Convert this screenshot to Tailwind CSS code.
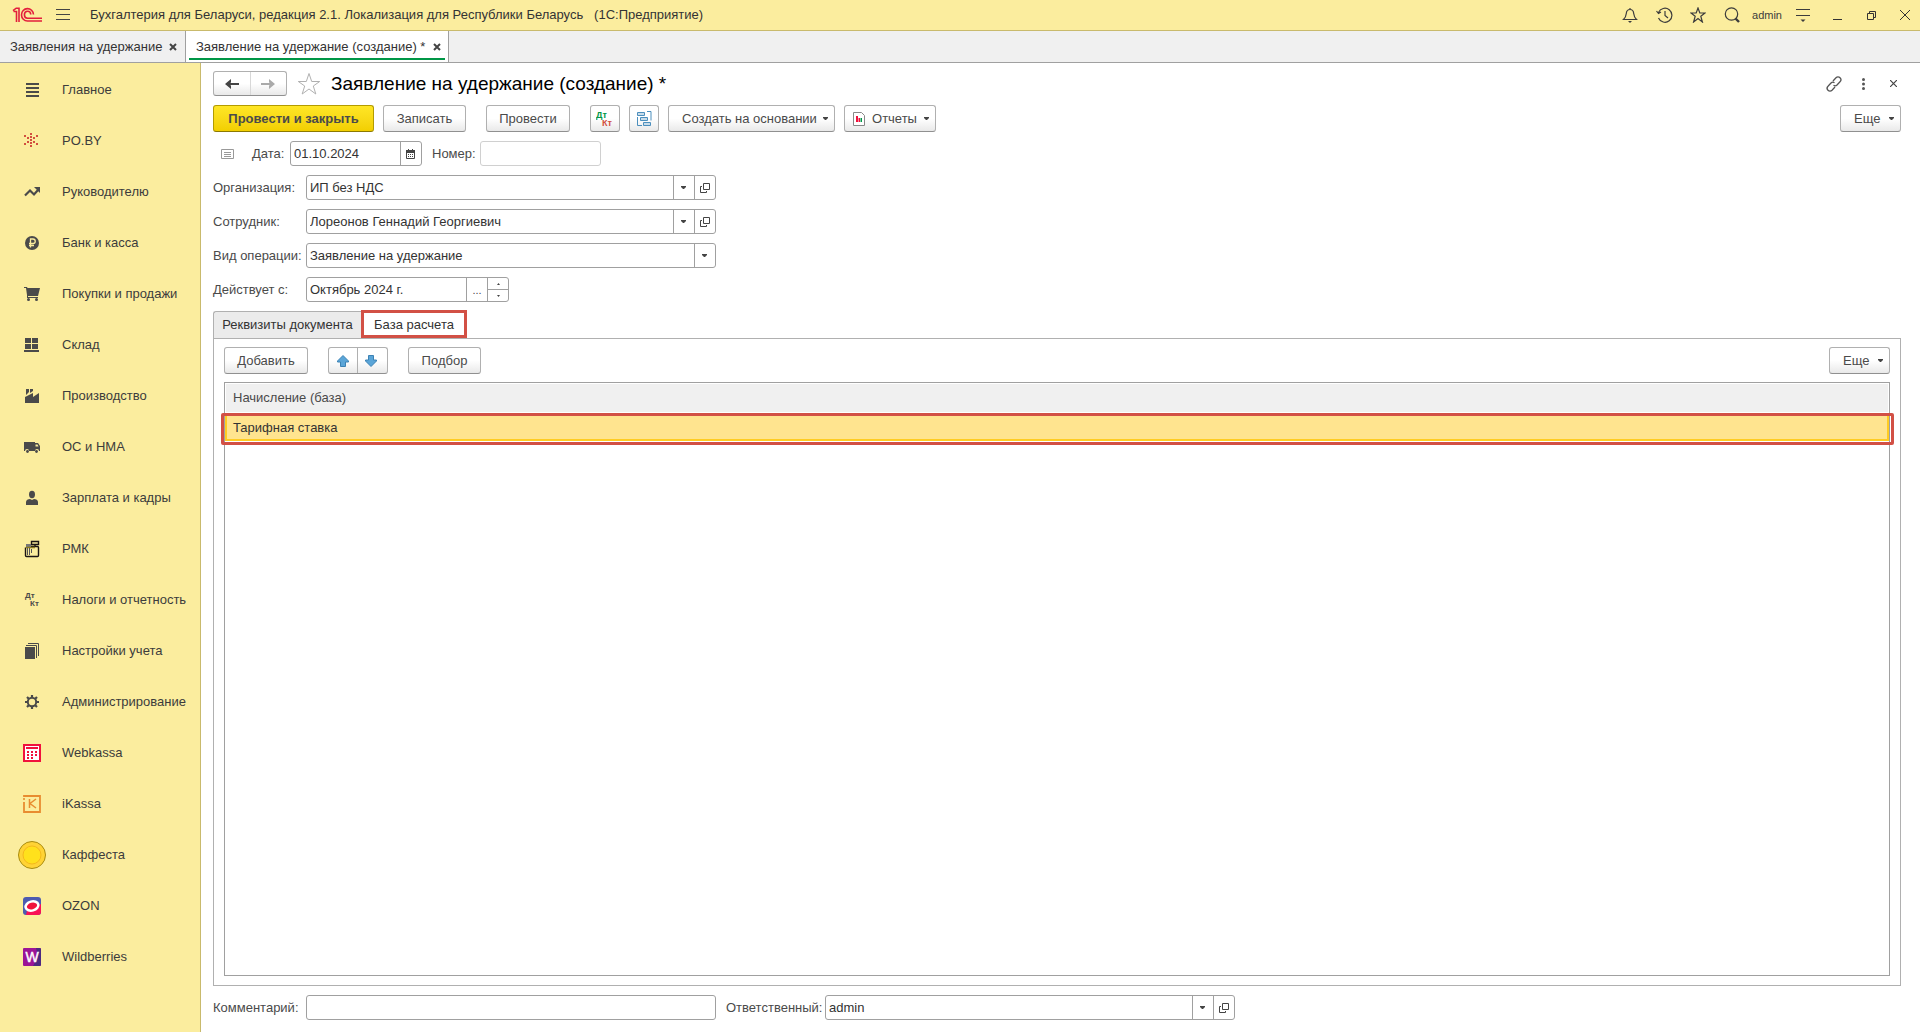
<!DOCTYPE html>
<html lang="ru">
<head>
<meta charset="utf-8">
<title>Заявление на удержание (создание)</title>
<script src="https://cdn.jsdelivr.net/npm/@tailwindcss/browser@4"></script>
</head>
<body class="flex min-h-screen flex-col bg-white font-['Liberation_Sans',Arial,sans-serif] text-[13px] leading-4 text-[#333]">
<svg class="hidden">
  <symbol id="caret" viewBox="0 0 5 3"><path d="M0 0h5v1L3 3H2L0 1z" fill="#444"/></symbol>
  <symbol id="open" viewBox="0 0 10 10"><path d="M3.500 .5h6v6h-6zM2 3.500H.5v6h6V8" fill="none" stroke="#444"/></symbol>
  <symbol id="cross" viewBox="0 0 8 8"><path d="M1 1l6 6M7 1L1 7" fill="none" stroke="#444" stroke-width="2"/></symbol>
</svg>

<header class="flex h-[31px] items-center border-b border-[#c9ba6c] bg-[#fbed9e] pr-[10px] pl-3">
  <svg class="h-4 w-[31px]" viewBox="0 0 31 16" fill="none" stroke="#e31e3c" stroke-width="1.600"><path d="M1 3.600L4.200 1.200H7V15M4.500 15V4.500H1.500M21.500 7.500A6 6.200 0 1 0 15.500 14H30M18.800 7.500A3.200 3.500 0 1 0 15.500 11.300H30"/></svg>
  <button class="ml-[13px]" aria-label="Меню"><svg class="h-3 w-[14px]" viewBox="0 0 14 12" fill="none" stroke="#444"><path d="M0 .5h14M0 5.500h14M0 10.500h14"/></svg></button>
  <span class="ml-5 whitespace-nowrap">Бухгалтерия для Беларуси, редакция 2.1. Локализация для Республики Беларусь &nbsp; (1С:Предприятие)</span>
  <div class="ml-auto flex items-center text-[#3c3c3c]">
    <button aria-label="Уведомления"><svg class="size-4" viewBox="0 0 16 16" fill="none" stroke="currentColor" stroke-width="1.200"><path d="M1.500 12.500h13c-2-2-2.500-3-2.800-6C11.500 3.500 10 2.500 8 2.500S4.500 3.500 4.300 6.500c-.3 3-.8 4-2.800 6zM8 2.500V1"/><path d="M6 14h4l-2 2z" fill="currentColor" stroke="none"/></svg></button>
    <button class="ml-[18px]" aria-label="История"><svg class="h-4 w-[17px]" viewBox="0 0 17 16" fill="none" stroke="currentColor" stroke-width="1.200"><path d="M2.500 5.500A7 7 0 1 1 2.500 11M9 4v4.500l3 2.500M.5 4l2 2.500L5 5"/></svg></button>
    <button class="ml-[17px]" aria-label="Избранное"><svg class="size-4" viewBox="0 0 16 16" fill="none" stroke="currentColor" stroke-width="1.200"><path d="M8 1l1.800 5h5.200l-4.200 3.200L12.400 15 8 11.500 3.600 15l1.600-5.800L1 6h5.200z"/></svg></button>
    <button class="ml-[18px]" aria-label="Поиск"><svg class="size-4" viewBox="0 0 16 16" fill="none" stroke="currentColor" stroke-width="1.200"><circle cx="7.500" cy="7" r="6.200"/><path d="M11.500 11.500l3.500 3.500" stroke-width="2.400"/></svg></button>
    <span class="ml-3 text-[11px]">admin</span>
    <button class="ml-[14px]" aria-label="Сервис"><svg class="h-[13px] w-[14px]" viewBox="0 0 14 13" fill="none" stroke="currentColor"><path d="M0 .5h14M0 6.500h14"/><path d="M4.500 10.500h5L7 13z" fill="currentColor" stroke="none"/></svg></button>
    <button class="ml-[23px]" aria-label="Свернуть"><svg class="h-[10px] w-[9px]" viewBox="0 0 9 10"><path d="M0 9.500h9" stroke="#333"/></svg></button>
    <button class="ml-[25px]" aria-label="Развернуть"><svg class="size-[9px]" viewBox="0 0 9 9" fill="none" stroke="#333"><path d="M.5 2.500h6v6h-6zM2.500 2V.5h6v6H7"/></svg></button>
    <button class="ml-6" aria-label="Закрыть программу"><svg class="size-[10px]" viewBox="0 0 10 10" fill="none" stroke="#333"><path d="M0 0l10 10M10 0L0 10"/></svg></button>
  </div>
</header>

<nav class="flex h-8 border-b border-[#a0a0a0] bg-[#f0f0f0]" aria-label="Открытые окна">
  <a href="#" class="flex w-[186px] items-center justify-between border-r border-[#a0a0a0] pr-2 pl-[10px] whitespace-nowrap">Заявления на удержание<svg class="size-2"><use href="#cross"/></svg></a>
  <a href="#" class="flex w-[263px] border-r border-[#a0a0a0] bg-white px-[3px]"><span class="mb-[2px] flex flex-1 items-center justify-between border-b-2 border-[#009646] pt-1 pr-1 pl-[7px] whitespace-nowrap">Заявление на удержание (создание) *<svg class="size-2"><use href="#cross"/></svg></span></a>
</nav>

<div class="flex flex-1">
  <aside class="w-[201px] shrink-0 border-r border-[#c9ba6c] bg-[#fbed9e] pt-px">
    <nav class="flex flex-col text-[#3c3c3c]" aria-label="Разделы">
      <a href="#" class="flex h-[51px] items-center gap-4 pl-[18px]"><svg class="size-7" viewBox="0 0 28 28"><path d="M8 7h13v2H8zM8 11h13v2H8zM8 15h13v2H8zM8 19h13v2H8z" fill="#4a4a4a"/></svg>Главное</a>
      <a href="#" class="flex h-[51px] items-center gap-4 pl-[18px]"><svg class="size-7" viewBox="0 0 28 28"><path d="M12 6h2v2h-2zM12 9h2v2h-2zM12 12h2v2h-2zM12 15h2v2h-2zM12 18h2v2h-2zM6 8h2v2H6zM18 8h2v2h-2zM9 10h2v2H9zM15 10h2v2h-2zM9 14h2v2H9zM15 14h2v2h-2zM6 16h2v2H6zM18 16h2v2h-2z" fill="#d2503f"/></svg>PO.BY</a>
      <a href="#" class="flex h-[51px] items-center gap-4 pl-[18px]"><svg class="size-7" viewBox="0 0 28 28"><path d="M7 17.500l5-5 4 4 4-4.500" fill="none" stroke="#4a4a4a" stroke-width="2.200"/><path d="M16 9h6v6z" fill="#4a4a4a"/></svg>Руководителю</a>
      <a href="#" class="flex h-[51px] items-center gap-4 pl-[18px]"><svg class="size-7" viewBox="0 0 28 28"><circle cx="14" cy="14" r="7" fill="#4a4a4a"/><path d="M12.500 18.500V10h2.500a2.200 2.200 0 0 1 0 4.500h-4M11 16.500h5" fill="none" stroke="#fbed9e" stroke-width="1.300"/></svg>Банк и касса</a>
      <a href="#" class="flex h-[51px] items-center gap-4 pl-[18px]"><svg class="size-7" viewBox="0 0 28 28" fill="#4a4a4a"><path d="M6 7h3l.5 1H22l-2 8H10v1h10v1H9v-3L8 8H6z"/><circle cx="10.500" cy="19.500" r="1.500"/><circle cx="18.500" cy="19.500" r="1.500"/></svg>Покупки и продажи</a>
      <a href="#" class="flex h-[51px] items-center gap-4 pl-[18px]"><svg class="size-7" viewBox="0 0 28 28"><path d="M7 7h6v5H7zM14 7h6v5h-6zM7 13h6v5H7zM14 13h6v5h-6zM6 19h15v2H6z" fill="#4a4a4a"/></svg>Склад</a>
      <a href="#" class="flex h-[51px] items-center gap-4 pl-[18px]"><svg class="size-7" viewBox="0 0 28 28"><path d="M7 21v-6l8-4v4l6-4v10zM8 7h3v3l-3 3zM12 7h3v2l-3 2z" fill="#4a4a4a"/></svg>Производство</a>
      <a href="#" class="flex h-[51px] items-center gap-4 pl-[18px]"><svg class="size-7" viewBox="0 0 28 28"><path d="M6 9h11v1h3l2 3v5h-1a2 2 0 0 0-4 0h-6a2 2 0 0 0-4 0H6z" fill="#4a4a4a"/><circle cx="9.500" cy="18.500" r="1.400" fill="#4a4a4a"/><circle cx="18.500" cy="18.500" r="1.400" fill="#4a4a4a"/><path d="M17.500 11.500h2l1 2h-3z" fill="#fbed9e"/></svg>ОС и НМА</a>
      <a href="#" class="flex h-[51px] items-center gap-4 pl-[18px]"><svg class="size-7" viewBox="0 0 28 28" fill="#4a4a4a"><ellipse cx="14" cy="10.500" rx="3" ry="3.700"/><path d="M8 21v-3c0-2 2-3 4-3l2 1 2-1c2 0 4 1 4 3v3z"/></svg>Зарплата и кадры</a>
      <a href="#" class="flex h-[51px] items-center gap-4 pl-[18px]"><svg class="size-7" viewBox="0 0 28 28" fill="none"><path d="M13 11.500h6.500a1 1 0 0 1 1 1v8a1 1 0 0 1-1 1h-11a1 1 0 0 1-1-1v-8" stroke="#1a1414" stroke-width="1.400"/><path d="M13.500 6.500h7v3h-7zM17 9.500v2" stroke="#1a1414" stroke-width="1.400"/><path d="M8 9h5v4H8z" fill="#777"/><path d="M8 12.500h9" stroke="#8a7a20" stroke-width="1.500"/><path d="M9.500 13v7M11.500 13v7M13.500 14v4" stroke="#555"/></svg>РМК</a>
      <a href="#" class="flex h-[51px] items-center gap-4 pl-[18px]"><svg class="size-7" viewBox="0 0 28 28" fill="#4a4a4a" font-size="8" font-weight="700"><text x="7" y="12">Дт</text><text x="12" y="20">Кт</text></svg>Налоги и отчетность</a>
      <a href="#" class="flex h-[51px] items-center gap-4 pl-[18px]"><svg class="size-7" viewBox="0 0 28 28"><path d="M7 10h10v12H7z" fill="#4a4a4a"/><path d="M8 8.500h10.500V21M10 6.500h10.500V19" fill="none" stroke="#4a4a4a"/></svg>Настройки учета</a>
      <a href="#" class="flex h-[51px] items-center gap-4 pl-[18px]"><svg class="size-7" viewBox="0 0 28 28" fill="none" stroke="#4a4a4a"><circle cx="14" cy="14" r="4.200" stroke-width="2"/><path d="M14 7v2.500M14 18.500V21M7 14h2.500M18.500 14H21M9 9l2 2M17 17l2 2M19 9l-2 2M11 17l-2 2" stroke-width="2.200"/></svg>Администрирование</a>
      <a href="#" class="flex h-[51px] items-center gap-4 pl-[18px]"><svg class="size-7" viewBox="0 0 28 28"><path d="M6 6h16v16H6z" fill="#fff" stroke="#f0123c" stroke-width="2"/><path d="M8 8h12v2H8zM9 12h2v2H9zM13 12h2v2h-2zM17 12h2v2h-2zM9 15h2v2H9zM13 15h2v2h-2zM17 15h2v2h-2zM9 18h2v2H9zM13 18h2v2h-2z" fill="#f0123c"/></svg>Webkassa</a>
      <a href="#" class="flex h-[51px] items-center gap-4 pl-[18px]"><svg class="size-7" viewBox="0 0 28 28" fill="none" stroke="#e88c30"><path d="M6 7V6h16v16H6V12" stroke-width="1.800"/><path d="M6 8v2" stroke-width="1.600"/><path d="M11.500 9v9M18 9l-6 4.500 6 4.500" stroke-width="1.500"/></svg>iKassa</a>
      <a href="#" class="flex h-[51px] items-center gap-4 pl-[18px]"><svg class="size-7" viewBox="0 0 28 28"><circle cx="14" cy="14" r="13.500" fill="#ffd335" stroke="#a88c10"/><circle cx="14" cy="14" r="9" fill="#ffe11c" stroke="#f5b81c"/></svg>Каффеста</a>
      <a href="#" class="flex h-[51px] items-center gap-4 pl-[18px]"><svg class="size-7" viewBox="0 0 28 28"><rect x="5" y="5" width="18" height="18" rx="3" fill="#4d5bb0"/><path d="M8 23h12a3 3 0 0 0 3-3v-8L9 19z" fill="#f91155"/><ellipse cx="14" cy="14" rx="6.500" ry="4.500" transform="rotate(-15 14 14)" fill="#f0123c" stroke="#fff" stroke-width="2.500"/></svg>OZON</a>
      <a href="#" class="flex h-[51px] items-center gap-4 pl-[18px]"><svg class="size-7" viewBox="0 0 28 28"><rect x="5" y="5" width="18" height="18" rx="1" fill="#9b1596"/><path d="M18 5h4l1 1v16l-1 1h-7l5-9z" fill="#4b2a80"/><text x="14" y="19" text-anchor="middle" font-size="14" fill="#fff" stroke="#fff" stroke-width=".4">W</text></svg>Wildberries</a>
    </nav>
  </aside>

  <main class="flex min-w-0 flex-1 flex-col pt-2 pr-[19px] pb-3 pl-3 text-[#4a4a4a]">
    <div class="flex h-[25px] items-center">
      <div class="flex h-[25px] w-[74px] rounded-[3px] border border-[#b0b0b0] border-b-[#909090] bg-linear-to-b from-white from-50% to-[#e9e9e9]">
        <button class="grid flex-1 place-items-center" aria-label="Назад"><svg class="h-[10px] w-[14px]" viewBox="0 0 14 10"><path d="M0 5l6-5v3.500L5 4h9v2H5l1 .5V10z" fill="#444"/></svg></button>
        <button class="grid flex-1 place-items-center border-l border-[#d8d8d8]" aria-label="Вперед"><svg class="h-[10px] w-[14px]" viewBox="0 0 14 10"><path d="M14 5L8 0v3.500L9 4H0v2h9l-1 .5V10z" fill="#aaa"/></svg></button>
      </div>
      <button class="ml-[10px]" aria-label="Добавить в избранное"><svg class="size-6" viewBox="0 0 24 24" fill="none" stroke="#b0b0b0"><path d="M12 1.500l2.700 8h8L16.300 14l2.500 8L12 17l-6.800 5 2.500-8L1.300 9.500h8z"/></svg></button>
      <h1 class="ml-[10px] text-[19px] leading-6 text-black">Заявление на удержание (создание) *</h1>
      <div class="ml-auto flex items-center pr-1">
        <button aria-label="Ссылка"><svg class="size-4" viewBox="0 0 16 16" fill="none" stroke="#555" stroke-width="1.300"><path d="M7 5l3-3.200a2.700 2.700 0 0 1 4 4L11 9c-1 1-2.500 1-3.500.3M9 11l-3 3.200a2.700 2.700 0 0 1-4-4L5 7c1-1 2.500-1 3.500-.3"/></svg></button>
        <button class="ml-5" aria-label="Еще действия"><svg class="h-3 w-[3px]" viewBox="0 0 3 12" fill="#555"><circle cx="1.500" cy="1.500" r="1.500"/><circle cx="1.500" cy="6" r="1.500"/><circle cx="1.500" cy="10.500" r="1.500"/></svg></button>
        <button class="ml-[25px]" aria-label="Закрыть"><svg class="size-[7px]" viewBox="0 0 7 7" fill="none" stroke="#444" stroke-width="1.200"><path d="M0 0l7 7M7 0L0 7"/></svg></button>
      </div>
    </div>

    <div class="mt-[9px] flex">
      <button class="h-[27px] w-[161px] rounded-[3px] border border-[#b39b00] border-b-[#8c7900] bg-linear-to-b from-[#ffe625] to-[#f2cf00] font-bold whitespace-nowrap">Провести и закрыть</button>
      <button class="ml-[9px] h-[27px] w-[83px] rounded-[3px] border border-[#b0b0b0] border-b-[#909090] bg-linear-to-b from-white from-50% to-[#e9e9e9]">Записать</button>
      <button class="ml-5 h-[27px] w-[84px] rounded-[3px] border border-[#b0b0b0] border-b-[#909090] bg-linear-to-b from-white from-50% to-[#e9e9e9]">Провести</button>
      <button class="ml-5 grid h-[27px] w-[30px] place-items-center rounded-[3px] border border-[#b0b0b0] border-b-[#909090] bg-linear-to-b from-white from-50% to-[#e9e9e9]" aria-label="Проводки"><svg class="h-4 w-[18px]" viewBox="0 0 18 16" font-size="9" font-weight="700"><text x="0" y="7" fill="#009646">Дт</text><text x="6" y="15" fill="#d2503f">Кт</text></svg></button>
      <button class="ml-[9px] grid h-[27px] w-[30px] place-items-center rounded-[3px] border border-[#b0b0b0] border-b-[#909090] bg-linear-to-b from-white from-50% to-[#e9e9e9]" aria-label="Структура подчиненности"><svg class="h-[15px] w-[15px]" viewBox="0 0 15 15" fill="#c8dcea" stroke="#4c8fbd"><path d="M.5 1.500h7v3h-7zM3.500 6.500h7v3h-7zM6.500 11.500h7v3h-7z"/><path d="M10 .5h4v9M.5 6v8.500H5" fill="none"/></svg></button>
      <button class="ml-[9px] flex h-[27px] w-[167px] items-center justify-between rounded-[3px] border border-[#b0b0b0] border-b-[#909090] bg-linear-to-b from-white from-50% to-[#e9e9e9] pr-[6px] pl-[13px] whitespace-nowrap">Создать на основании<svg class="h-[3px] w-[5px]"><use href="#caret"/></svg></button>
      <button class="ml-[9px] flex h-[27px] w-[92px] items-center justify-between rounded-[3px] border border-[#b0b0b0] border-b-[#909090] bg-linear-to-b from-white from-50% to-[#e9e9e9] pr-[6px] pl-2"><svg class="h-[14px] w-3" viewBox="0 0 12 14"><path d="M.5.5h8l3 3v10H.5z" fill="#fff" stroke="#888"/><path d="M3 4h2v6H3z" fill="#f0123c"/><path d="M5.500 6h1.500v4H5.500z" fill="#f0123c"/><path d="M7.500 6h1.500v4H7.500z" fill="#009646"/></svg>Отчеты<svg class="h-[3px] w-[5px]"><use href="#caret"/></svg></button>
      <button class="ml-auto flex h-[27px] w-[61px] items-center justify-between rounded-[3px] border border-[#b0b0b0] border-b-[#909090] bg-linear-to-b from-white from-50% to-[#e9e9e9] pr-[6px] pl-[13px]">Еще<svg class="h-[3px] w-[5px]"><use href="#caret"/></svg></button>
    </div>

    <form class="mt-[9px] flex flex-1 flex-col">
      <div class="flex h-[25px] items-center">
        <svg class="ml-2 h-[10px] w-[13px]" viewBox="0 0 13 10"><path d="M.5.5h12v9H.5zM3 3.500h7M3 5.500h7M3 7.500h7" fill="none" stroke="#999"/></svg>
        <label for="date" class="ml-[18px] w-[38px]">Дата:</label>
        <div class="flex h-[25px] w-[132px] rounded-[3px] border border-[#a0a0a0]">
          <input id="date" value="01.10.2024" class="min-w-0 flex-1 pl-[3px] text-[#333] outline-none">
          <button type="button" class="grid w-[21px] place-items-center border-l border-[#a0a0a0] pr-px" aria-label="Календарь"><svg class="h-[10px] w-[9px]" viewBox="0 0 9 10"><path d="M.5 2v7.500h8V2" fill="none" stroke="#444"/><path d="M0 1h9v3H0zM2 0h1v1H2zM6 0h1v1H6zM2 5h1v1H2zM4 5h1v1H4zM6 5h1v1H6zM2 7h1v1H2zM4 7h1v1H4zM6 7h1v1H6z" fill="#444"/></svg></button>
        </div>
        <label for="number" class="ml-[10px] w-12">Номер:</label>
        <input id="number" class="h-[25px] w-[121px] rounded-[3px] border border-[#d0d0d0] px-[3px] outline-none">
      </div>

      <div class="mt-[9px] grid grid-cols-[93px_410px] gap-y-[9px]">
        <label for="org" class="self-center">Организация:</label>
        <div class="flex h-[25px] rounded-[3px] border border-[#a0a0a0]">
          <select id="org" class="min-w-0 flex-1 appearance-none pl-[3px] text-[#333] outline-none"><option>ИП без НДС</option></select>
          <button type="button" class="grid w-[21px] place-items-center border-l border-[#a0a0a0] pr-px" aria-label="Выбрать организацию"><svg class="h-[3px] w-[5px]"><use href="#caret"/></svg></button>
          <button type="button" class="grid w-[21px] place-items-center border-l border-[#a0a0a0]" aria-label="Открыть организацию"><svg class="size-[10px]"><use href="#open"/></svg></button>
        </div>
        <label for="employee" class="self-center">Сотрудник:</label>
        <div class="flex h-[25px] rounded-[3px] border border-[#a0a0a0]">
          <select id="employee" class="min-w-0 flex-1 appearance-none pl-[3px] text-[#333] outline-none"><option>Лореонов Геннадий Георгиевич</option></select>
          <button type="button" class="grid w-[21px] place-items-center border-l border-[#a0a0a0] pr-px" aria-label="Выбрать сотрудника"><svg class="h-[3px] w-[5px]"><use href="#caret"/></svg></button>
          <button type="button" class="grid w-[21px] place-items-center border-l border-[#a0a0a0]" aria-label="Открыть сотрудника"><svg class="size-[10px]"><use href="#open"/></svg></button>
        </div>
        <label for="operation" class="self-center whitespace-nowrap">Вид операции:</label>
        <div class="flex h-[25px] rounded-[3px] border border-[#a0a0a0]">
          <select id="operation" class="min-w-0 flex-1 appearance-none pl-[3px] text-[#333] outline-none"><option>Заявление на удержание</option></select>
          <button type="button" class="grid w-[21px] place-items-center border-l border-[#a0a0a0] pr-px" aria-label="Выбрать вид операции"><svg class="h-[3px] w-[5px]"><use href="#caret"/></svg></button>
        </div>
        <label for="period" class="self-center">Действует с:</label>
        <div class="flex h-[25px] w-[203px] rounded-[3px] border border-[#a0a0a0]">
          <input id="period" value="Октябрь 2024 г." class="min-w-0 flex-1 pl-[3px] text-[#333] outline-none">
          <button type="button" class="w-[21px] border-l border-[#a0a0a0] text-[11px]" aria-label="Выбрать период">...</button>
          <div class="flex w-[21px] flex-col border-l border-[#a0a0a0]">
            <button type="button" class="grid flex-1 place-items-center" aria-label="Следующий месяц"><svg class="h-[2px] w-[3px]" viewBox="0 0 3 2"><path d="M0 2h3L1.500 0z" fill="#444"/></svg></button>
            <button type="button" class="grid flex-1 place-items-center border-t border-[#a0a0a0]" aria-label="Предыдущий месяц"><svg class="h-[2px] w-[3px]" viewBox="0 0 3 2"><path d="M0 0h3L1.500 2z" fill="#444"/></svg></button>
          </div>
        </div>
      </div>

      <div class="z-10 mt-2 -mb-px flex h-[29px] items-start text-[#333]" role="tablist">
        <button type="button" role="tab" class="mt-px h-[28px] w-[148px] rounded-tl-[3px] border border-r-0 border-[#b0b0b0] bg-[#ebebeb] whitespace-nowrap">Реквизиты документа</button>
        <button type="button" role="tab" aria-selected="true" class="h-[28px] w-[106px] border-3 border-[#d25045] bg-white pt-[2px] whitespace-nowrap">База расчета</button>
      </div>
      <section class="flex flex-1 flex-col border border-[#b0b0b0] px-[10px] pt-2 pb-[9px]">
        <div class="flex">
          <button type="button" class="h-[27px] w-[84px] rounded-[3px] border border-[#b0b0b0] border-b-[#909090] bg-linear-to-b from-white from-50% to-[#e9e9e9]">Добавить</button>
          <div class="ml-5 flex h-[27px] w-[60px] rounded-[3px] border border-[#b0b0b0] border-b-[#909090] bg-linear-to-b from-white from-50% to-[#e9e9e9]">
            <button type="button" class="grid flex-1 place-items-center" aria-label="Вверх"><svg class="size-3" viewBox="0 0 12 12"><path d="M6 .5L11.500 6v1H8.500v4.500h-5V7H.5V6z" fill="#5aa5d8" stroke="#3c82b4"/></svg></button>
            <button type="button" class="grid flex-1 place-items-center border-l border-[#b0b0b0] pr-[2px]" aria-label="Вниз"><svg class="size-3" viewBox="0 0 12 12"><path d="M6 11.500L11.500 6V5H8.500V.5h-5V5H.5v1z" fill="#5aa5d8" stroke="#3c82b4"/></svg></button>
          </div>
          <button type="button" class="ml-5 h-[27px] w-[73px] rounded-[3px] border border-[#b0b0b0] border-b-[#909090] bg-linear-to-b from-white from-50% to-[#e9e9e9]">Подбор</button>
          <button type="button" class="ml-auto flex h-[27px] w-[61px] items-center justify-between rounded-[3px] border border-[#b0b0b0] border-b-[#909090] bg-linear-to-b from-white from-50% to-[#e9e9e9] pr-[6px] pl-[13px]">Еще<svg class="h-[3px] w-[5px]"><use href="#caret"/></svg></button>
        </div>
        <div class="mt-2 flex-1 border border-[#a0a0a0] pt-px">
          <table class="w-full border-separate border-spacing-0">
            <thead><tr><th class="h-[30px] border-x border-b-2 border-white bg-[#f0f0f0] p-0 pl-[7px] text-left font-normal">Начисление (база)</th></tr></thead>
            <tbody><tr><td class="relative h-[27px] border-2 border-t-0 border-[#ffcc22] bg-[#ffe48f] p-0 pt-[3px] pl-[6px] text-[#333]">Тарифная ставка<span class="absolute -top-px -right-[7px] -bottom-[6px] -left-[6px] rounded-[2px] border-3 border-[#d25045]"></span></td></tr></tbody>
          </table>
        </div>
      </section>

      <div class="mt-[9px] flex items-center">
        <label for="comment" class="w-[93px]">Комментарий:</label>
        <input id="comment" class="h-[25px] w-[410px] rounded-[3px] border border-[#a0a0a0] px-[3px] outline-none">
        <label for="responsible" class="ml-[10px] w-[99px]">Ответственный:</label>
        <div class="flex h-[25px] w-[410px] rounded-[3px] border border-[#a0a0a0]">
          <select id="responsible" class="min-w-0 flex-1 appearance-none pl-[3px] text-[#333] outline-none"><option>admin</option></select>
          <button type="button" class="grid w-[21px] place-items-center border-l border-[#a0a0a0] pr-px" aria-label="Выбрать ответственного"><svg class="h-[3px] w-[5px]"><use href="#caret"/></svg></button>
          <button type="button" class="grid w-[21px] place-items-center border-l border-[#a0a0a0]" aria-label="Открыть ответственного"><svg class="size-[10px]"><use href="#open"/></svg></button>
        </div>
      </div>
    </form>
  </main>
</div>
</body>
</html>
